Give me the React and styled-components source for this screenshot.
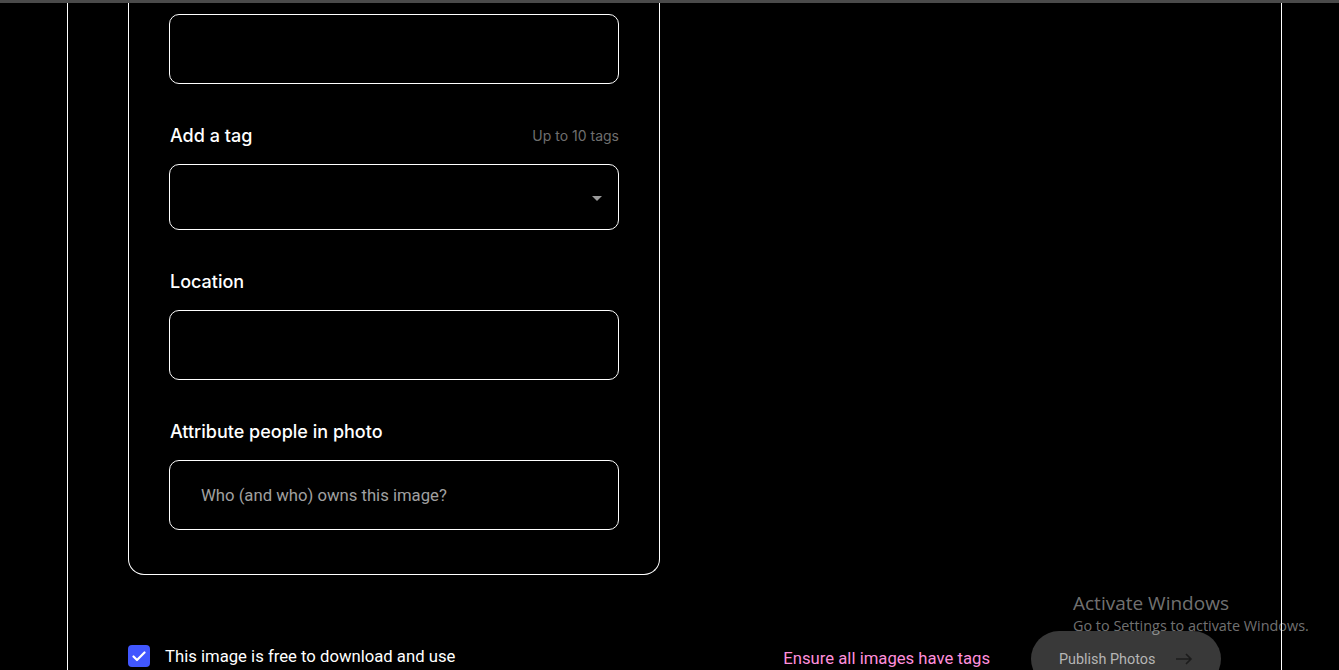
import React from 'react';
import styled, { createGlobalStyle } from 'styled-components';

const GlobalStyle = createGlobalStyle`
  html, body {
    margin: 0;
    padding: 0;
    background: #000;
    height: 100%;
    overflow: hidden;
  }
  body {
    font-family: 'Roboto', 'Liberation Sans', sans-serif;
    color: #fff;
  }
`;

const TopBar = styled.div`
  height: 3px;
  background: #4a4a4a;
`;

const Page = styled.div`
  margin: 0 57px 0 67px;
  min-height: 667px;
  border-left: 1px solid #fff;
  border-right: 1px solid #fff;
  padding: 0 60px;
  box-sizing: border-box;
`;

const Card = styled.div`
  width: 532px;
  box-sizing: border-box;
  border: 1px solid #fff;
  border-top: none;
  border-radius: 0 0 16px 16px;
  padding: 11px 40px 44px;
  display: flex;
  flex-direction: column;
  gap: 39px;
`;

const Field = styled.div`
  display: flex;
  flex-direction: column;
`;

const LabelRow = styled.div`
  display: flex;
  align-items: center;
  justify-content: space-between;
  height: 24px;
  margin-bottom: 17px;
  padding-left: 1px;
`;

const Label = styled.span`
  font-family: 'Inter', 'Liberation Sans', sans-serif;
  font-size: 18px;
  font-weight: 500;
  color: #fff;
`;

const Hint = styled.span`
  font-family: 'Inter', 'Liberation Sans', sans-serif;
  font-size: 14px;
  color: #6f6f6f;
`;

const Input = styled.div`
  height: ${p => p.$h || 70}px;
  box-sizing: border-box;
  border: 1px solid #fff;
  border-radius: 10px;
  display: flex;
  align-items: center;
  padding: 0 ${p => (p.$select ? 16 : 31)}px 0 31px;
  justify-content: ${p => (p.$select ? 'flex-end' : 'flex-start')};
  font-size: 16.7px;
  color: #a0a0a0;
`;

const Caret = styled.span`
  width: 0;
  height: 0;
  border-left: 5px solid transparent;
  border-right: 5px solid transparent;
  border-top: 5px solid #9a9a9a;
  margin-top: 2px;
`;

const Footer = styled.div`
  display: flex;
  align-items: center;
  justify-content: space-between;
  margin-top: 56px;
  height: 56px;
`;

const CheckRow = styled.label`
  display: flex;
  align-items: center;
  gap: 15px;
  font-size: 16.7px;
  color: #fff;
  margin-top: -6px;
`;

const Box = styled.span`
  width: 22px;
  height: 22px;
  border-radius: 4px;
  background: #4157ff;
  display: flex;
  align-items: center;
  justify-content: center;
`;

const Actions = styled.div`
  display: flex;
  align-items: center;
  gap: 41px;
`;

const Warning = styled.span`
  font-size: 16.7px;
  color: #ff8fdc;
  margin-top: -1px;
`;

const PublishButton = styled.button`
  height: 56px;
  width: 190px;
  border: none;
  border-radius: 28px;
  background: #393939;
  color: #b5b5b5;
  font-family: 'Roboto', 'Liberation Sans', sans-serif;
  font-size: 14.4px;
  display: flex;
  align-items: center;
  justify-content: space-between;
  padding: 0 28px;
`;

const Watermark = styled.div`
  position: absolute;
  left: 1073px;
  top: 590px;
  font-family: 'Open Sans', 'Liberation Sans', sans-serif;
  color: rgba(255, 255, 255, 0.45);
  pointer-events: none;
`;

const WatermarkTitle = styled.div`
  font-size: 19px;
  line-height: 26px;
`;

const WatermarkSub = styled.div`
  font-size: 14.4px;
  line-height: 20px;
`;

const fields = [
  { label: 'Add a tag', hint: 'Up to 10 tags', select: true },
  { label: 'Location' },
  { label: 'Attribute people in photo', placeholder: 'Who (and who) owns this image?' },
];

export default function App() {
  return (
    <>
      <GlobalStyle />
      <TopBar />
      <Page>
        <Card>
          <Input />
          {fields.map(f => (
            <Field key={f.label}>
              <LabelRow>
                <Label>{f.label}</Label>
                {f.hint && <Hint>{f.hint}</Hint>}
              </LabelRow>
              {f.select ? (
                <Input $select $h={66}><Caret /></Input>
              ) : (
                <Input>{f.placeholder}</Input>
              )}
            </Field>
          ))}
        </Card>
        <Footer>
          <CheckRow>
            <Box>
              <svg width="14" height="11" viewBox="0 0 14 11" fill="none">
                <path d="M1.5 5.5L5 9L12.5 1.5" stroke="#fff" strokeWidth="2.2" strokeLinecap="round" strokeLinejoin="round" />
              </svg>
            </Box>
            This image is free to download and use
          </CheckRow>
          <Actions>
            <Warning>Ensure all images have tags</Warning>
            <PublishButton>
              Publish Photos
              <svg width="18" height="12" viewBox="0 0 18 12" fill="none">
                <path d="M1 6H16M11 1L16 6L11 11" stroke="#1c1c1c" strokeWidth="1.6" />
              </svg>
            </PublishButton>
          </Actions>
        </Footer>
      </Page>
      <Watermark>
        <WatermarkTitle>Activate Windows</WatermarkTitle>
        <WatermarkSub>Go to Settings to activate Windows.</WatermarkSub>
      </Watermark>
    </>
  );
}
